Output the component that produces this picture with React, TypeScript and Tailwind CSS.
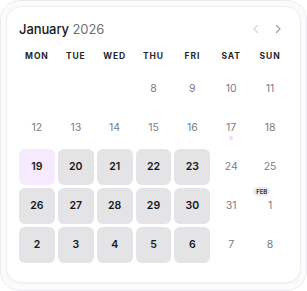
import React from "react";

type Day = {
  n: number;
  kind: "muted" | "filled" | "today" | "empty";
  dot?: boolean;
  badge?: string;
};

const weekdays = ["MON", "TUE", "WED", "THU", "FRI", "SAT", "SUN"];

const weeks: Day[][] = [
  [
    { n: 0, kind: "empty" },
    { n: 0, kind: "empty" },
    { n: 0, kind: "empty" },
    { n: 8, kind: "muted" },
    { n: 9, kind: "muted" },
    { n: 10, kind: "muted" },
    { n: 11, kind: "muted" },
  ],
  [12, 13, 14, 15, 16, 17, 18].map((n) => ({
    n,
    kind: "muted" as const,
    dot: n === 17,
  })),
  [
    { n: 19, kind: "today" },
    { n: 20, kind: "filled" },
    { n: 21, kind: "filled" },
    { n: 22, kind: "filled" },
    { n: 23, kind: "filled" },
    { n: 24, kind: "muted" },
    { n: 25, kind: "muted" },
  ],
  [
    { n: 26, kind: "filled" },
    { n: 27, kind: "filled" },
    { n: 28, kind: "filled" },
    { n: 29, kind: "filled" },
    { n: 30, kind: "filled" },
    { n: 31, kind: "muted" },
    { n: 1, kind: "muted", badge: "FEB" },
  ],
  [
    { n: 2, kind: "filled" },
    { n: 3, kind: "filled" },
    { n: 4, kind: "filled" },
    { n: 5, kind: "filled" },
    { n: 6, kind: "filled" },
    { n: 7, kind: "muted" },
    { n: 8, kind: "muted" },
  ],
];

function Chevron({ dir, className }: { dir: "left" | "right"; className?: string }) {
  return (
    <svg width="8" height="10" viewBox="0 0 8 10" fill="none" className={className}>
      <path
        d={dir === "left" ? "M5.5 1.5 2 5l3.5 3.5" : "M2.5 1.5 6 5 2.5 8.5"}
        stroke="currentColor"
        strokeWidth="1.2"
        strokeLinecap="round"
        strokeLinejoin="round"
      />
    </svg>
  );
}

function DayCell({ day }: { day: Day }) {
  if (day.kind === "empty") return <div className="h-9" />;

  const base = "relative flex h-9 items-center justify-center rounded-[6px] text-[10.5px]";
  if (day.kind === "today")
    return (
      <div className={`${base} bg-[#f5eafe] font-semibold text-[#18181b]`}>{day.n}</div>
    );
  if (day.kind === "filled")
    return (
      <div className={`${base} bg-[#e4e4e7] font-semibold text-[#18181b]`}>{day.n}</div>
    );

  return (
    <div className={`${base} text-[#7c7c85]`}>
      {day.badge && (
        <span className="absolute left-[1px] top-[-1px] rounded-full bg-[#ececef] px-[3px] text-[6px] font-bold leading-[9px] text-[#3f3f46]">
          {day.badge}
        </span>
      )}
      {day.n}
      {day.dot && (
        <span className="absolute bottom-[6px] left-1/2 size-[4px] -translate-x-1/2 rounded-full bg-[#ead9fd]" />
      )}
    </div>
  );
}

export default function App() {
  return (
    <div
      className="h-[291px] w-[307px] bg-white"
      style={{ fontFamily: "Inter, 'Noto Sans', sans-serif" }}
    >
      <div className="h-full rounded-[20px] border border-[#ececef] bg-[#fbfbfc] p-[5px]">
        <div className="h-[277px] rounded-[15px] border border-[#eeeef0] bg-white px-3 pt-3 shadow-[0_1px_2px_rgba(0,0,0,0.04)]">
          <div className="flex h-5 items-center justify-between">
            <div className="text-[13px] leading-5 tracking-[-0.1px]">
              <span className="font-medium text-[#18181b]">January</span>{" "}
              <span className="text-[#71717a]">2026</span>
            </div>
            <div className="mr-[6px] flex items-center gap-[14px]">
              <Chevron dir="left" className="text-[#d4d4d8]" />
              <Chevron dir="right" className="text-[#a1a1aa]" />
            </div>
          </div>

          <div className="mt-[9px] grid grid-cols-7 gap-x-[3px]">
            {weekdays.map((w) => (
              <div
                key={w}
                className="text-center text-[8.5px] font-bold leading-4 tracking-[0.9px] text-[#27272a]"
              >
                {w}
              </div>
            ))}
          </div>

          <div className="mt-[7px] grid grid-cols-7 gap-[3px]">
            {weeks.flat().map((d, i) => (
              <DayCell key={i} day={d} />
            ))}
          </div>
        </div>
      </div>
    </div>
  );
}
